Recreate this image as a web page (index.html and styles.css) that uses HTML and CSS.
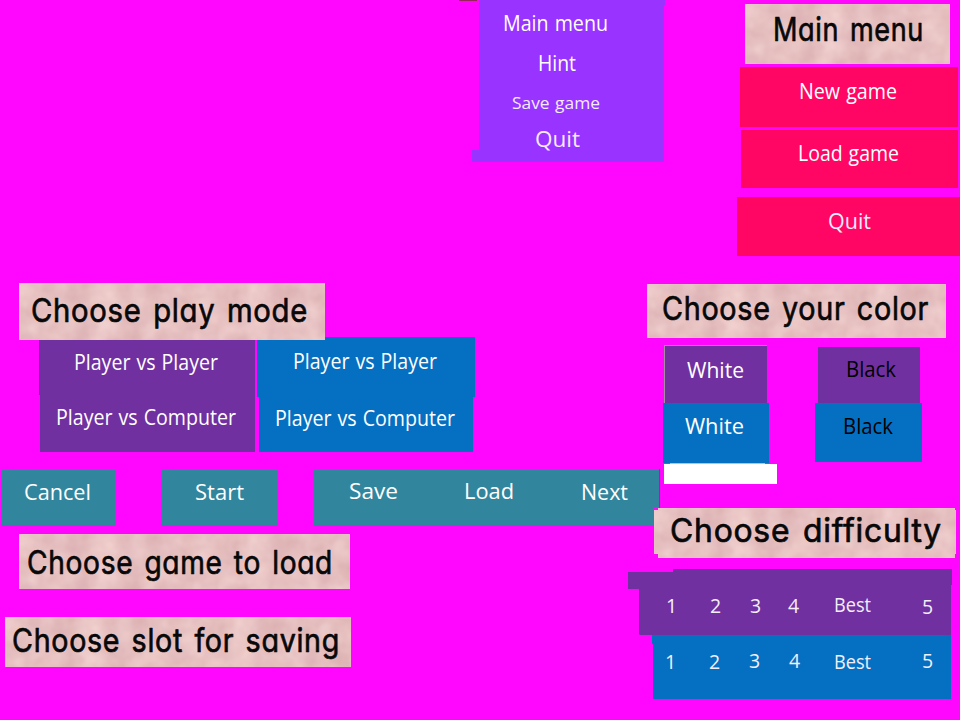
FILE: index.html
```html
<!DOCTYPE html>
<html lang="en">
<head>
<meta charset="utf-8">
<title>Menu sprites</title>
<link rel="stylesheet" href="styles.css">
</head>
<body>
<svg class="defs" width="0" height="0" aria-hidden="true">
  <filter id="paper" x="0" y="0" width="100%" height="100%" color-interpolation-filters="sRGB">
    <feTurbulence type="fractalNoise" baseFrequency="0.04" numOctaves="3" seed="4"/>
    <feColorMatrix values="0.11 0 0 0 0.848  0.17 0 0 0 0.67  0.15 0.03 0 0 0.665  0 0 0 0 1"/>
  </filter>
</svg>
<main class="sheet">

  <section class="group pause">
    <div class="notch"></div>
    <div class="block pause-top"></div>
    <div class="block pause-body"></div>
    <div class="block pause-foot"></div>
    <svg class="labels" width="193" height="162">
      <text x="31" y="31" textLength="105" lengthAdjust="spacingAndGlyphs">Main menu</text>
      <text x="66" y="71" textLength="38" lengthAdjust="spacingAndGlyphs">Hint</text>
      <text class="small" x="40" y="109" textLength="88" lengthAdjust="spacingAndGlyphs">Save game</text>
      <rect class="clip-row" x="50" y="111" width="20" height="5"/>
      <text class="soft" x="63" y="147" textLength="45" lengthAdjust="spacingAndGlyphs">Quit</text>
    </svg>
  </section>

  <section class="group main">
    <svg class="title" width="205" height="60"><rect width="205" height="60" filter="url(#paper)"/><text x="28" y="37" textLength="151" lengthAdjust="spacingAndGlyphs">Main menu</text></svg>
    <svg class="red new" width="218" height="60"><text x="59" y="32" textLength="98" lengthAdjust="spacingAndGlyphs">New game</text></svg>
    <svg class="red load" width="217" height="58"><text x="57" y="31" textLength="101" lengthAdjust="spacingAndGlyphs">Load game</text></svg>
    <svg class="red quit" width="223" height="59"><text class="soft" x="91" y="32" textLength="43" lengthAdjust="spacingAndGlyphs">Quit</text></svg>
  </section>

  <section class="group mode">
    <svg class="title" width="306" height="57"><rect width="306" height="57" filter="url(#paper)"/><text x="12" y="39" textLength="277" lengthAdjust="spacingAndGlyphs">Choose play mode</text></svg>
    <div class="mode-list">
      <div class="column">
        <svg class="purple" width="216" height="58"><text x="35" y="33" textLength="144" lengthAdjust="spacingAndGlyphs">Player vs Player</text></svg>
        <svg class="purple indent" width="215" height="57"><text x="16" y="30" textLength="180" lengthAdjust="spacingAndGlyphs">Player vs Computer</text></svg>
      </div>
      <div class="column">
        <svg class="blue" width="218" height="60"><text x="36" y="32" textLength="144" lengthAdjust="spacingAndGlyphs">Player vs Player</text></svg>
        <svg class="blue second" width="214" height="55"><text x="16" y="29" textLength="180" lengthAdjust="spacingAndGlyphs">Player vs Computer</text></svg>
      </div>
    </div>
  </section>

  <section class="group color">
    <svg class="title" width="299" height="54"><rect width="299" height="54" filter="url(#paper)"/><text x="15" y="36" textLength="267" lengthAdjust="spacingAndGlyphs">Choose your color</text></svg>
    <div class="color-list">
      <div class="column white-col">
        <svg class="purple edge" width="103" height="58"><text x="22" y="32" textLength="57" lengthAdjust="spacingAndGlyphs">White</text></svg>
        <svg class="blue" width="106" height="60"><text x="22" y="31" textLength="59" lengthAdjust="spacingAndGlyphs">White</text></svg>
        <div class="gold"></div>
        <div class="blank"></div>
      </div>
      <div class="column black-col">
        <svg class="purple ink" width="102" height="56"><text x="28" y="30" textLength="50" lengthAdjust="spacingAndGlyphs">Black</text></svg>
        <svg class="blue ink" width="107" height="59"><text x="28" y="31" textLength="50" lengthAdjust="spacingAndGlyphs">Black</text></svg>
      </div>
    </div>
  </section>

  <section class="group actions">
    <svg class="teal" width="114" height="56"><text x="22" y="31" textLength="67" lengthAdjust="spacingAndGlyphs">Cancel</text></svg>
    <svg class="teal" width="116" height="56"><text x="33" y="31" textLength="49" lengthAdjust="spacingAndGlyphs">Start</text></svg>
    <svg class="teal last" width="346" height="56"><text x="35" y="30" textLength="49" lengthAdjust="spacingAndGlyphs">Save</text><text x="150" y="30" textLength="50" lengthAdjust="spacingAndGlyphs">Load</text><text x="267" y="31" textLength="47" lengthAdjust="spacingAndGlyphs">Next</text></svg>
  </section>

  <section class="group slots">
    <svg class="title load-title" width="331" height="55"><rect width="331" height="55" filter="url(#paper)"/><text x="8" y="40" textLength="306" lengthAdjust="spacingAndGlyphs">Choose game to load</text></svg>
    <svg class="title" width="346" height="50"><rect width="346" height="50" filter="url(#paper)"/><text x="7" y="35" textLength="328" lengthAdjust="spacingAndGlyphs">Choose slot for saving</text></svg>
  </section>

  <section class="group difficulty">
    <svg class="title diff-title" width="302" height="50"><rect width="302" height="50" filter="url(#paper)"/><path class="gap" d="M0 0H4V2H0zM301 0H302V2H301zM0 46H4V50H0zM301 46H302V50H301z"/><text x="16" y="34" textLength="272" lengthAdjust="spacingAndGlyphs">Choose difficulty</text></svg>
    <svg class="levels" width="324" height="130">
      <path class="fill-purple" d="M45 0H324V16H323V66H12L11 65V20H0V3H45z"/>
      <path class="fill-blue" d="M24 66H323V130H25V75H24z"/>
      <text x="38" y="44">1</text><text x="82" y="44">2</text><text x="122" y="44">3</text><text x="160" y="44">4</text><text x="206" y="43" textLength="37" lengthAdjust="spacingAndGlyphs">Best</text><text x="294" y="45">5</text>
      <text x="37" y="100">1</text><text x="81" y="100">2</text><text x="121" y="99">3</text><text x="161" y="99">4</text><text x="206" y="100" textLength="37" lengthAdjust="spacingAndGlyphs">Best</text><text x="294" y="99">5</text>
    </svg>
  </section>
</main>
</body>
</html>
```

FILE: styles.css
```css
* { box-sizing: border-box; }
body { margin: 0; background: #fff; }
svg { display: block; flex: none; overflow: visible; }
.defs { position: absolute; }
.sheet { position: relative; width: 960px; height: 720px; overflow: hidden; background: #ff06ff; }
.group { position: absolute; }
.column { display: flex; flex-direction: column; }

text { font: 21.5px "Open Sans", "Noto Sans", sans-serif; word-spacing: 1px; fill: #fff; }
.soft { fill: #f3eaff; }
.small { font-size: 17px; fill: #f3eaff; }
.levels text { font-size: 19.5px; fill: #f3eefa; }
.ink text { fill: #000; }
.title text {
  font: 33px "Comic Sans MS", Inter, sans-serif;
  font-feature-settings: "cv11";
  font-variant-ligatures: none;
  letter-spacing: .8px; word-spacing: 3px;
  fill: #080808; stroke: #080808; stroke-width: .7; stroke-linejoin: round;
}

.purple { background: #7030a0; }
.blue { background: #0570c1; }
.red { background: #ff0664; }
.teal { background: #31869e; }
.fill-purple { fill: #7030a0; }
.fill-blue { fill: #0570c1; }
.gap { fill: #ff06ff; }

.pause { left: 472px; top: 0; width: 193px; }
.pause .block { background: #9933ff; }
.pause-top { height: 5px; margin-left: 7px; }
.pause-body { height: 145px; margin: 0 1px 0 7px; }
.pause-foot { height: 12px; margin-right: 1px; }
.notch { position: absolute; left: -13px; top: 0; width: 18px; height: 1px; background: #99235a; }
.labels { position: absolute; left: 0; top: 0; }
.clip-row { fill: #9933ff; }

.main { left: 737px; top: 4px; width: 223px; display: flex; flex-direction: column; }
.main .title { margin-left: 8px; }
.new { margin: 3px 0 3px 3px; }
.load { margin: 0 0 9px 4px; }

.mode { left: 19px; top: 283px; }
.mode-list { display: flex; gap: 2px; margin: -3px 0 0 20px; }
.mode .title { position: relative; z-index: 1; }
.indent { margin-left: 1px; }
.second { margin-left: 2px; }

.color { left: 647px; top: 284px; }
.color-list { display: flex; gap: 45px; margin: 7px 0 0 16px; }
.white-col { width: 107px; }
.edge { margin-left: 1px; border-top: 1px solid #a78aa8; border-left: 1px solid #a78aa8; }
.gold { width: 95px; height: 1px; margin-left: 7px; background: #e8c832; }
.blank { width: 113px; height: 20px; margin-left: 1px; background: #fff; }
.black-col { padding-top: 2px; }
.black-col .purple { margin-left: 3px; }

.actions { left: 2px; top: 469px; display: flex; }
.actions .teal:nth-child(2) { margin: 0 36px 0 46px; }
.last { border-right: 1px solid #a03250; }

.slots { left: 5px; top: 534px; display: flex; flex-direction: column; gap: 28px; }
.load-title { margin-left: 14px; }

.difficulty { left: 628px; top: 508px; }
.diff-title { margin: 0 0 11px 26px; }
```
